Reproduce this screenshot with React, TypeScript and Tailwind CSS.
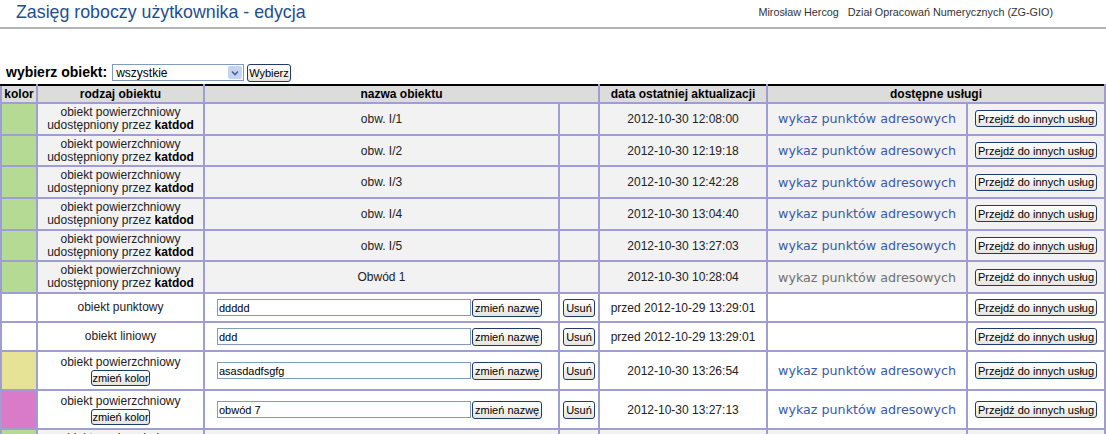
import React from 'react';

type Row = {
  kind: 'shared' | 'own';
  color: string;
  type: string;
  name: string;
  date: string;
  link: 'blue' | 'gray' | null;
  colorBtn?: boolean;
};

const ROWS: Row[] = [
  { kind: 'shared', color: '#b5da93', type: 'obiekt powierzchniowy', name: 'obw. I/1', date: '2012-10-30 12:08:00', link: 'blue' },
  { kind: 'shared', color: '#b5da93', type: 'obiekt powierzchniowy', name: 'obw. I/2', date: '2012-10-30 12:19:18', link: 'blue' },
  { kind: 'shared', color: '#b5da93', type: 'obiekt powierzchniowy', name: 'obw. I/3', date: '2012-10-30 12:42:28', link: 'blue' },
  { kind: 'shared', color: '#b5da93', type: 'obiekt powierzchniowy', name: 'obw. I/4', date: '2012-10-30 13:04:40', link: 'blue' },
  { kind: 'shared', color: '#b5da93', type: 'obiekt powierzchniowy', name: 'obw. I/5', date: '2012-10-30 13:27:03', link: 'blue' },
  { kind: 'shared', color: '#b5da93', type: 'obiekt powierzchniowy', name: 'Obwód 1', date: '2012-10-30 10:28:04', link: 'gray' },
  { kind: 'own', color: '#ffffff', type: 'obiekt punktowy', name: 'ddddd', date: 'przed 2012-10-29 13:29:01', link: null },
  { kind: 'own', color: '#ffffff', type: 'obiekt liniowy', name: 'ddd', date: 'przed 2012-10-29 13:29:01', link: null },
  { kind: 'own', color: '#e6e397', type: 'obiekt powierzchniowy', name: 'asasdadfsgfg', date: '2012-10-30 13:26:54', link: 'blue', colorBtn: true },
  { kind: 'own', color: '#d97bc9', type: 'obiekt powierzchniowy', name: 'obwód 7', date: '2012-10-30 13:27:13', link: 'blue', colorBtn: true },
  { kind: 'shared', color: '#b5da93', type: 'obiekt powierzchniowy', name: 'obw. I/6', date: '2012-10-30 13:30:11', link: 'blue' },
];

const font = "font-['Liberation_Sans',Arial,sans-serif]";
const cell = 'border-2 border-[#a09dd2] p-0 text-center align-middle';

function XpButton({ children, className = '' }: { children: React.ReactNode; className?: string }) {
  return (
    <button
      className={`whitespace-nowrap rounded-[3px] border border-[#1f3b6e] bg-gradient-to-b from-white to-[#e5e4dc] text-[11px] leading-[14px] text-black ${font} ${className}`}
    >
      {children}
    </button>
  );
}

export default function App() {
  return (
    <div className={`h-[434px] w-[1106px] overflow-hidden bg-white text-[#222] ${font}`}>
      {/* Header */}
      <div className="flex h-[27px] items-start justify-between">
        <h1 className="pl-4 pt-[1px] text-[17.8px] leading-[22px] text-[#1f4e8f]">Zasięg roboczy użytkownika - edycja</h1>
        <div className="flex gap-[9px] pr-[53px] pt-[4px] text-[10.8px] text-[#333]">
          <span>Mirosław Hercog</span>
          <span>Dział Opracowań Numerycznych (ZG-GIO)</span>
        </div>
      </div>
      <div className="h-[2px] bg-[#b4b4b4]" />

      {/* Filter */}
      <div className="mt-[34px] flex h-[19px] items-center pl-[6px]">
        <span className="mr-[5px] text-[14px] font-bold text-black">wybierz obiekt:</span>
        <div className="flex h-[17px] w-[132px] items-center border border-[#7f9db9] bg-white">
          <span className="flex-1 pl-[3px] text-[12px] text-black">wszystkie</span>
          <span className="m-[1px] flex h-[13px] w-[14px] items-center justify-center rounded-[2px] bg-[#c3d4f7]">
            <svg width="8" height="6" viewBox="0 0 8 6">
              <path d="M1 1.5 L4 4.5 L7 1.5" fill="none" stroke="#4d6185" strokeWidth="1.6" />
            </svg>
          </span>
        </div>
        <XpButton className="ml-[3px] h-[18px] px-[1px] text-[11.5px]">Wybierz</XpButton>
      </div>

      {/* Table */}
      <table className="mt-[2px] w-[1104px] table-fixed border-collapse text-[12px]">
        <colgroup>
          <col className="w-[36px]" />
          <col className="w-[167px]" />
          <col className="w-[355px]" />
          <col className="w-[40px]" />
          <col className="w-[168px]" />
          <col className="w-[200px]" />
          <col className="w-[138px]" />
        </colgroup>
        <thead>
          <tr className="h-[18px] bg-[#dcdcdc] leading-[13px] text-black">
            <th className={`${cell} border-t-black font-bold`}>kolor</th>
            <th className={`${cell} border-t-black font-bold`}>rodzaj obiektu</th>
            <th colSpan={2} className={`${cell} border-t-black font-bold`}>nazwa obiektu</th>
            <th className={`${cell} border-t-black font-bold`}>data ostatniej aktualizacji</th>
            <th colSpan={2} className={`${cell} border-t-black font-bold`}>dostępne usługi</th>
          </tr>
        </thead>
        <tbody>
          {ROWS.map((r, i) => {
            const shared = r.kind === 'shared';
            const h = shared ? 'h-[31.7px]' : r.colorBtn ? 'h-[39px]' : 'h-[29px]';
            return (
              <tr key={i} className={`${h} ${shared ? 'bg-[#f2f2f2]' : 'bg-white'}`}>
                <td className={cell} style={{ backgroundColor: r.color }} />
                <td className={`${cell} leading-[13px]`}>
                  {shared ? (
                    <>
                      <div>{r.type}</div>
                      <div>
                        udostępniony przez <b className="text-black">katdod</b>
                      </div>
                    </>
                  ) : (
                    <>
                      <div>{r.type}</div>
                      {r.colorBtn && <XpButton className="mt-[1px] h-[16px] px-0">zmień kolor</XpButton>}
                    </>
                  )}
                </td>
                {shared ? (
                  <>
                    <td className={cell}>{r.name}</td>
                    <td className={cell} />
                  </>
                ) : (
                  <>
                    <td className={`${cell} pl-[12px] text-left`}>
                      <div className="flex items-center">
                        <input
                          readOnly
                          value={r.name}
                          className={`h-[17px] w-[254px] border border-[#7f9db9] bg-white px-[1px] text-[11px] text-black outline-none ${font}`}
                        />
                        <XpButton className="ml-[1px] h-[18px] px-[2px]">zmień nazwę</XpButton>
                      </div>
                    </td>
                    <td className={cell}>
                      <XpButton className="h-[18px] px-[2px]">Usuń</XpButton>
                    </td>
                  </>
                )}
                <td className={`${cell} text-[12px]`}>{r.date}</td>
                <td className={`${cell} font-['DejaVu_Sans',Verdana,sans-serif] text-[12.7px]`}>
                  {r.link === 'blue' && <span className="text-[#3b5aa6]">wykaz punktów adresowych</span>}
                  {r.link === 'gray' && <span className="text-[#707070]">wykaz punktów adresowych</span>}
                </td>
                <td className={cell}>
                  <XpButton className="h-[17px] px-[2px]">Przejdź do innych usług</XpButton>
                </td>
              </tr>
            );
          })}
        </tbody>
      </table>
    </div>
  );
}
